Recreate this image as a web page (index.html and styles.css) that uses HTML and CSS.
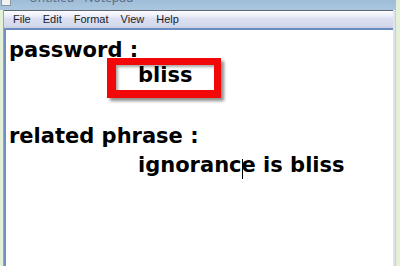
FILE: index.html
```html
<!DOCTYPE html>
<html>
<head>
<meta charset="utf-8">
<link rel="stylesheet" href="styles.css">
</head>
<body>
<div class="window">
  <div class="titlebar">
    <span class="appicon"></span>
    <span class="title">Untitled - Notepad</span>
  </div>
  <div class="client">
    <div class="pane">
      <div class="menubar">
        <span class="menu-item">File</span>
        <span class="menu-item">Edit</span>
        <span class="menu-item">Format</span>
        <span class="menu-item">View</span>
        <span class="menu-item">Help</span>
      </div>
      <div class="edit">
        <div class="line l1">password :</div>
        <div class="line l2">bliss</div>
        <div class="line l3">related phrase :</div>
        <div class="line l4">ignoranc<span class="caret"></span>e is bliss</div>
        <span class="highlight"></span>
      </div>
    </div>
  </div>
</div>
</body>
</html>
```
FILE: styles.css
```css
html, body {
  margin: 0;
  padding: 0;
}
body {
  width: 400px;
  height: 266px;
  overflow: hidden;
  background: #e4f1d8;
}
.window {
  display: flex;
  flex-direction: column;
  height: 266px;
}
.titlebar {
  height: 10px;
  flex: none;
  display: flex;
  align-items: flex-start;
  overflow: hidden;
  background: linear-gradient(#9fbcd8, #abc7df);
  margin-right: 4px;
}
.appicon {
  width: 8px;
  height: 5px;
  background: #f2f2f0;
  border: 1px solid #8c96a2;
  border-top: none;
  margin-left: 1px;
  flex: none;
}
.title {
  display: block;
  margin-left: 18px;
  margin-top: -8px;
  font: 12px/12px "Noto Sans", "DejaVu Sans", sans-serif;
  color: #5d6d7e;
  white-space: nowrap;
}
.client {
  flex: 1;
  display: flex;
  margin: 0 4px 0 3px;
  border-left: 1px solid #9aa6b4;
  border-right: 1px solid #c9cfd9;
}
.pane {
  flex: 1;
  display: flex;
  flex-direction: column;
  border-left: 2px solid #7191c2;
  border-right: 2px solid #dfe3ea;
}
.menubar {
  height: 17px;
  flex: none;
  display: flex;
  border-top: 1px solid #5f666f;
  border-bottom: 2px solid #6a8ec2;
  background: linear-gradient(#fbfcff 0%, #f0f2fb 25%, #dcdff1 45%, #d5d9ed 85%, #c9cde0 100%);
  margin-left: -2px;
}
.menu-item {
  padding: 0 6px;
  font: 11px/17px "Liberation Sans", Arial, sans-serif;
  color: #1b1d2a;
}
.menu-item:first-child {
  padding-left: 9px;
}
.edit {
  flex: 1;
  position: relative;
  background: #ffffff;
  padding: 8px 0 0 3px;
}
.line {
  height: 25px;
  font: bold 21px/25px "DejaVu Sans", sans-serif;
  color: #000000;
  white-space: pre;
}
.l2 {
  padding-left: 129px;
}
.l3 {
  margin-top: 36px;
}
.l4 {
  margin-top: 4px;
  padding-left: 129px;
}
.caret {
  display: inline-block;
  width: 1px;
  height: 20px;
  background: #000;
  vertical-align: -7px;
  margin-right: -1px;
}
.highlight {
  position: absolute;
  left: 101px;
  top: 28px;
  width: 98px;
  height: 25px;
  border-style: solid;
  border-color: #f20808;
  border-width: 7px 7px 8px 9px;
  box-shadow: 3px 3px 3px rgba(0, 0, 0, 0.45), inset 2px 2px 3px rgba(0, 0, 0, 0.35);
}
```
